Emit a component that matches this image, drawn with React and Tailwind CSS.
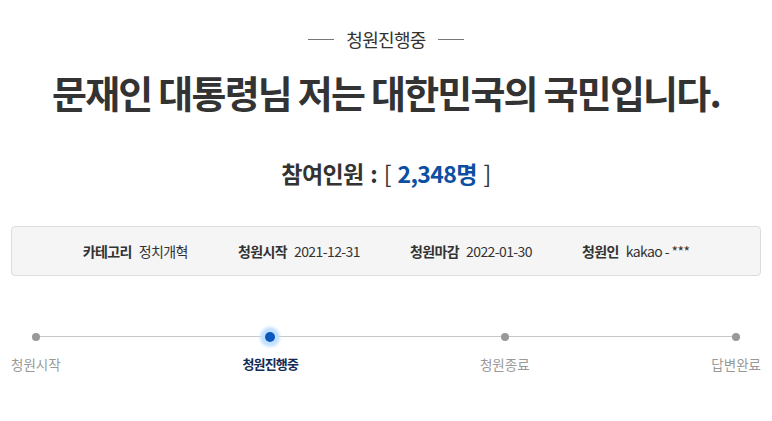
import React from "react";

const font = { fontFamily: '"Noto Sans CJK KR", "Noto Sans", sans-serif' };

const info = [
  { label: "카테고리", value: "정치개혁" },
  { label: "청원시작", value: "2021-12-31" },
  { label: "청원마감", value: "2022-01-30" },
  { label: "청원인", value: "kakao - ***" },
];

const steps = [
  { name: "청원시작", active: false },
  { name: "청원진행중", active: true },
  { name: "청원종료", active: false },
  { name: "답변완료", active: false },
];

export default function App() {
  return (
    <div className="w-[772px] h-[421px] bg-white overflow-hidden" style={font}>
      {/* status label */}
      <div className="flex items-center justify-center gap-3 pt-[25px]">
        <span className="w-[26px] h-px bg-[#777]" />
        <span className="text-[18px] leading-[28px] text-[#333] tracking-[-0.7px]">
          청원진행중
        </span>
        <span className="w-[26px] h-px bg-[#777]" />
      </div>

      {/* title */}
      <h1 className="mt-[14px] text-center text-[38px] leading-[50px] font-bold text-[#333] tracking-[-1.8px]">
        문재인 대통령님 저는 대한민국의 국민입니다.
      </h1>

      {/* participants */}
      <div className="mt-[39px] text-center text-[23px] leading-[34px] font-bold text-[#333] tracking-[-0.6px] [word-spacing:2px]">
        참여인원 : <span className="font-normal">[</span>{" "}
        <span className="text-[#0b4ea2]">2,348명</span>{" "}
        <span className="font-normal">]</span>
      </div>

      {/* info box */}
      <div className="mx-[11px] mt-[36px] h-[50px] flex items-center justify-center gap-[50px] bg-[#f5f5f5] border border-[#dcdcdc] rounded">
        {info.map((it) => (
          <div key={it.label} className="flex items-center gap-[7px] text-[14px] text-[#333] tracking-[-0.6px]">
            <span className="font-bold">{it.label}</span>
            <span>{it.value}</span>
          </div>
        ))}
      </div>

      {/* progress */}
      <div className="relative mx-[11px] mt-[52px]">
        <div className="absolute left-[25px] right-[25px] top-[8px] h-px bg-[#c8c8c8]" />
        <div className="relative flex justify-between">
          {steps.map((s) => (
            <div key={s.name} className="flex flex-col items-center">
              <div className="h-[17px] flex items-center justify-center">
                {s.active ? (
                  <span className="w-[10px] h-[10px] rounded-full bg-[#0a57bd] shadow-[0_0_3px_5px_#c2e0ff]" />
                ) : (
                  <span className="w-[8px] h-[8px] rounded-full bg-[#999]" />
                )}
              </div>
              <span
                className={
                  "mt-[9px] leading-[20px] " +
                  (s.active
                    ? "text-[13px] tracking-[-0.8px] font-bold text-[#132a55]"
                    : "text-[13.5px] text-[#999]")
                }
              >
                {s.name}
              </span>
            </div>
          ))}
        </div>
      </div>
    </div>
  );
}
